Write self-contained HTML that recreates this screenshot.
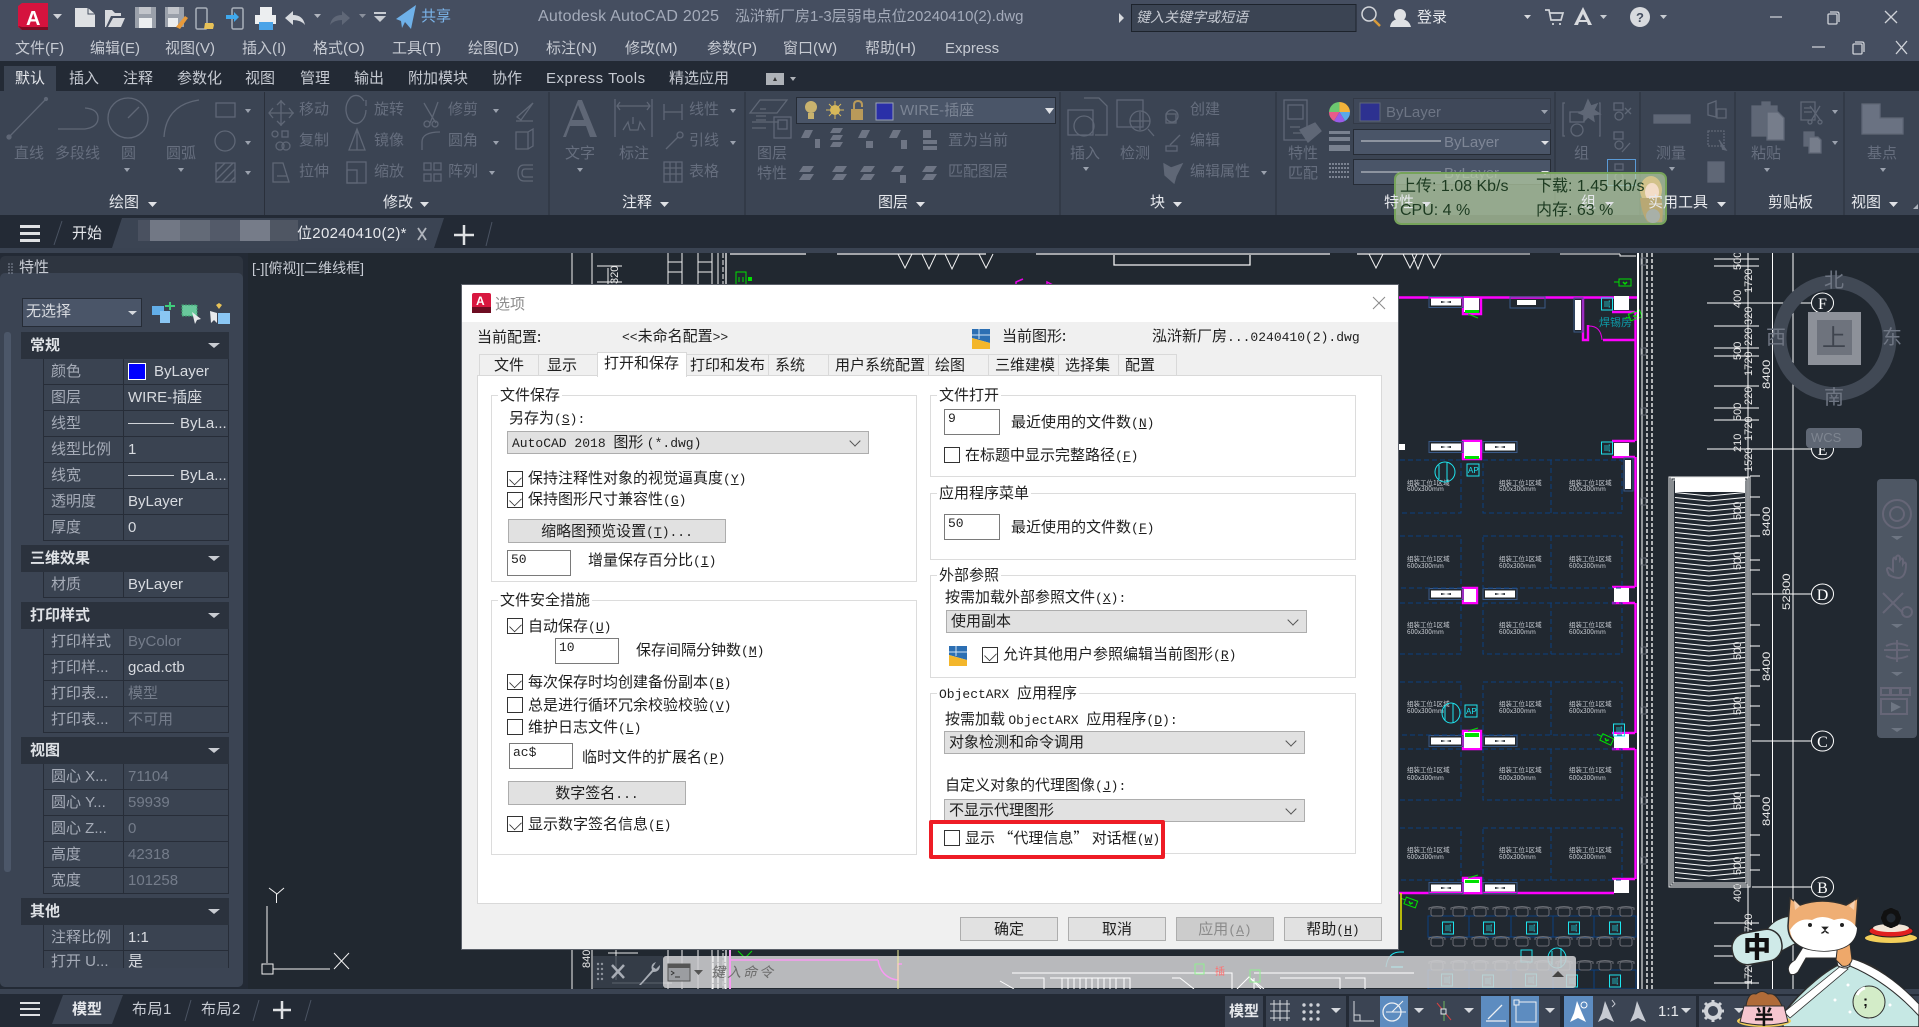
<!DOCTYPE html>
<html lang="zh-CN"><head><meta charset="utf-8"><title>AutoCAD 2025 选项</title>
<style>
*{box-sizing:border-box;margin:0;padding:0}
html,body{width:1919px;height:1027px;overflow:hidden;background:#212830}
body{position:relative;font-family:"Liberation Sans","Noto Sans CJK SC",sans-serif;font-size:15px}
svg{position:absolute;left:0;top:0;display:block}
.b{position:absolute}
.t{position:absolute;white-space:nowrap;line-height:20px;height:20px}
.m{color:#c6cad2}.g{color:#666e7e}.l{color:#e6e8ec}
.sec{position:absolute;left:21px;width:208px;height:27px;background:#2b323d;color:#dfe2e6;font-weight:700;line-height:27px;padding-left:9px}
.sec:after{content:"";position:absolute;left:187px;top:11px;border:5px solid transparent;border-top:5px solid #c9ccd2;border-left-width:6px;border-right-width:6px}
.r{position:absolute;left:43px;width:186px;height:26px;background:#3a4351;border:1px solid #272d38;border-top:0;color:#a5abb7;line-height:25px;white-space:nowrap}
.r span{position:absolute;left:7px;top:0}
.r em{position:absolute;left:79px;top:0;height:25px;width:106px;padding-left:4px;border-left:1px solid #272d38;font-style:normal;color:#d8dbe0;overflow:hidden}
.r em.d{color:#747c8a}
.r em i{display:inline-block;width:46px;height:1px;background:#d0d3d8;vertical-align:4px;margin-right:6px}
#dlg{position:absolute;left:461px;top:284px;width:938px;height:666px;background:#f0f0f0;border:1px solid #5a5f68;color:#1e1e1e;font-family:"Noto Sans CJK SC","Liberation Sans",sans-serif;overflow:hidden}
#dlg .x{position:absolute;white-space:nowrap;line-height:20px;height:20px}
#dlg s{text-decoration:none;font-family:"Liberation Mono",monospace;font-size:13px}
#dlg u{text-underline-offset:1px}
.tab{position:absolute;top:69px;height:22px;background:#f0f0f0;border:1px solid #d9d9d9;border-bottom:0;line-height:20px;white-space:nowrap;padding-left:6px}
.grp{position:absolute;border:1px solid #dcdcdc;background:#fff}
.lg{position:absolute;background:#fff;white-space:nowrap;line-height:18px;height:18px;padding:0 2px}
.sel{position:absolute;background:#e1e1e1;border:1px solid #adadad;height:23px;line-height:20px;padding-left:4px;white-space:nowrap}
.sel:after{content:"";position:absolute;right:9px;top:5px;width:7px;height:7px;border-right:1px solid #555;border-bottom:1px solid #555;transform:rotate(45deg)}
.btn{position:absolute;background:#e1e1e1;border:1px solid #adadad;height:24px;line-height:21px;text-align:center;white-space:nowrap}
.inp{position:absolute;background:#fff;border:1px solid #7a7a7a;height:26px;line-height:18px;padding-left:3px;font-family:"Liberation Mono",monospace;font-size:13px}
.cb{position:absolute;width:16px;height:16px;background:#fff;border:1px solid #333}
.cb.c:after{content:"";position:absolute;left:3px;top:1px;width:8px;height:11px;border-right:1.5px solid #333;border-bottom:1.5px solid #333;transform:rotate(45deg) scale(.85)}
</style></head><body>

<!-- ===== viewport drawing ===== -->
<svg width="1919" height="1027">
<defs>
<pattern id="zig" width="70" height="5" patternUnits="userSpaceOnUse" x="1675" y="492"><path d="M0 .5L34 4L70 .5" fill="none" stroke="#fff" stroke-width="1"/></pattern>
<g id="win"><rect x="-1" y="-5.500" width="34" height="11" fill="none" stroke="#3a5a88"/><path d="M1-3.500h30v7H1z" fill="#fff"/><path d="M11-1l5 1 5-1v2l-5-1-5 1z" fill="#212830"/></g>
<g id="chr" fill="none" stroke="#6a6d74"><rect x="-6" y="-4" width="12" height="8" rx="2"/><path d="M-8-2v-2q8-3 16 0v2"/></g>
<g id="ic"><rect x="-5.500" y="-6" width="11" height="12" fill="none" stroke="#1ee4ee"/><path d="M-2-3v6M0-3v6M3-3h-1v6h1" stroke="#1ee4ee" fill="none" stroke-width=".7"/></g>
<g id="grn" fill="none" stroke="#00e000"><path d="M-6-3h12v7H-6zM-6 0h-5"/><path d="M-2 0l2 2 2-2" stroke-width="1.500"/></g>
</defs>
<rect x="248" y="253" width="1671" height="736" fill="#212830"/>
<!-- left part -->
<g stroke="#f2f2f2" fill="none">
<path d="M572 253V989M592 253V989M608 268v20"/>
<path d="M597 282h25M597 266h25"/>
<path d="M668 253V989M682 253V989M698 253V989M712 253V989M718 253V989"/>
<path d="M668 262h14M668 272h14M698 262h14M698 272h14"/>
<path d="M723 253V989" stroke-dasharray="5 2"/>
<path d="M726 253V989" stroke-width="1.300"/>
<path d="M730 254h76M837 254h149M1036 254h294M1357 254h83M1114 255v10h136v-10" stroke-width="1.300"/>
<path d="M898 254l7 14 7-14M922 254l7 15 7-15M945 254l7 15 7-15M979 254l7 14 7-14M1369 254l7 14 7-14M1403 254l7 14 7-14M1427 254l7 14 7-14"/>
<path d="M1380 254h150M1560 254h60M1620 254v2h16M1412 254l6 15 6-15"/>
</g>
<g transform="translate(741 279)" fill="none" stroke="#00e000"><rect x="-5" y="-7" width="10" height="14"/><path d="M-2-2v5M2-2v5"/></g><rect x="748" y="277" width="4" height="4" fill="#00e000"/>
<path d="M1016 290v-8l7-3M1047 290v-8l6 3" stroke="#e800e8" fill="none" stroke-width="1.500"/>
<!-- magenta walls -->
<g stroke="#ff00ff" stroke-width="2.400" fill="none">
<path d="M1399 297.500H1638M1399 893H1614"/>
<path d="M1635.500 312V441M1635.500 457V587M1635.500 603V733M1635.500 749V879"/>
<path d="M1612 312h23M1612 441h23M1612 457h23M1612 587h23M1612 603h23M1612 733h23M1612 749h23M1612 879h23"/>
<path d="M1583 298v42h5v-15M1603 340h32"/>
<path d="M1463 441h18v18h-18zM1463 588h14v15h-14zM1463 731h18v18h-18zM1463 297v17h18v-17M1463 878h18v15h-18z"/>
</g>
<path d="M1589 326q12 0 13 14" stroke="#e800e8" fill="none"/>
<g fill="#fff">
<rect x="1464" y="298" width="15" height="14"/><rect x="1464" y="442" width="16" height="16"/><rect x="1464" y="589" width="12" height="13"/><rect x="1464" y="732" width="16" height="16"/><rect x="1464" y="879" width="16" height="13"/>
<rect x="1614" y="296" width="15" height="14"/><rect x="1614" y="443" width="15" height="13"/><rect x="1614" y="588" width="15" height="14"/><rect x="1614" y="734" width="15" height="14"/><rect x="1614" y="880" width="15" height="13"/>
<rect x="1399" y="444" width="6" height="6"/>
</g>
<g fill="#00e000"><rect x="1465" y="310" width="14" height="3"/><rect x="1465" y="456" width="14" height="3"/><rect x="1465" y="733" width="14" height="4"/><rect x="1465" y="880" width="14" height="3"/></g>
<path d="M1468 314l10 4M1468 731l10-3M1468 878l10-3" stroke="#00e000"/>
<use href="#win" x="1430" y="302"/><use href="#win" x="1430" y="447"/><use href="#win" x="1484" y="447"/><use href="#win" x="1430" y="594"/><use href="#win" x="1484" y="594"/><use href="#win" x="1430" y="741"/><use href="#win" x="1484" y="741"/><use href="#win" x="1430" y="888"/><use href="#win" x="1484" y="888"/>
<rect x="1510" y="297" width="35" height="11" fill="none" stroke="#3a5a88"/><rect x="1517" y="300" width="19" height="5" fill="#fff"/>
<rect x="1574" y="298" width="9" height="34" fill="none" stroke="#3a5a88"/><rect x="1575" y="300" width="6" height="30" fill="#fff"/>
<rect x="1624" y="458" width="9" height="33" fill="none" stroke="#3a5a88"/><rect x="1625" y="460" width="6" height="29" fill="#fff"/>
<!-- dashed cells -->
<g fill="none" stroke="#0c3f80" stroke-dasharray="5 3">
<path d="M1400 460h61v53h-61M1483 460h139v53h-139zM1551 460v53"/>
<path d="M1400 536h61v52h-61M1483 536h139v52h-139zM1551 536v52"/>
<path d="M1400 603h61v51h-61M1483 603h139v51h-139zM1551 603v51"/>
<path d="M1400 682h61v53h-61M1483 682h139v53h-139zM1551 682v53"/>
<path d="M1400 749h61v51h-61M1483 749h139v51h-139zM1551 749v51"/>
<path d="M1400 828h61v52h-61M1483 828h139v52h-139zM1551 828v52"/>
</g>
<g font-family="Noto Sans CJK SC,sans-serif" font-size="6.500" fill="#c8ccd2">
<text x="1407" y="485">组装工位1区域</text><text x="1407" y="491">600x300mm</text><text x="1499" y="485">组装工位1区域</text><text x="1499" y="491">600x300mm</text><text x="1569" y="485">组装工位1区域</text><text x="1569" y="491">600x300mm</text>
<text x="1407" y="561">组装工位1区域</text><text x="1407" y="568">600x300mm</text><text x="1499" y="561">组装工位1区域</text><text x="1499" y="568">600x300mm</text><text x="1569" y="561">组装工位1区域</text><text x="1569" y="568">600x300mm</text>
<text x="1407" y="627">组装工位1区域</text><text x="1407" y="634">600x300mm</text><text x="1499" y="627">组装工位1区域</text><text x="1499" y="634">600x300mm</text><text x="1569" y="627">组装工位1区域</text><text x="1569" y="634">600x300mm</text>
<text x="1407" y="706">组装工位1区域</text><text x="1407" y="713">600x300mm</text><text x="1499" y="706">组装工位1区域</text><text x="1499" y="713">600x300mm</text><text x="1569" y="706">组装工位1区域</text><text x="1569" y="713">600x300mm</text>
<text x="1407" y="772">组装工位1区域</text><text x="1407" y="780">600x300mm</text><text x="1499" y="772">组装工位1区域</text><text x="1499" y="780">600x300mm</text><text x="1569" y="772">组装工位1区域</text><text x="1569" y="780">600x300mm</text>
<text x="1407" y="852">组装工位1区域</text><text x="1407" y="859">600x300mm</text><text x="1499" y="852">组装工位1区域</text><text x="1499" y="859">600x300mm</text><text x="1569" y="852">组装工位1区域</text><text x="1569" y="859">600x300mm</text>
</g>
<text x="1599" y="326" font-family="Noto Sans CJK SC,sans-serif" font-size="11" fill="#0e9aa7">焊锡房</text>
<use href="#ic" x="1607" y="304"/><use href="#ic" x="1607" y="448"/><use href="#ic" x="1619" y="730"/>
<g fill="none" stroke="#1ee4ee"><rect x="1467" y="464" width="12" height="12"/><rect x="1465" y="705" width="12" height="12"/><ellipse cx="1445" cy="472" rx="10" ry="10"/><path d="M1439 465v14M1447 462v20"/><ellipse cx="1451" cy="713" rx="9" ry="10"/><path d="M1445 706v14M1453 703v20"/></g>
<g font-size="8" fill="#1ee4ee"><text x="1468" y="473">AP</text><text x="1466" y="714">AP</text></g>
<use href="#grn" transform="translate(1625 282)"/><use href="#grn" transform="translate(1635 315) rotate(-20)"/><use href="#grn" transform="translate(1607 739) rotate(25)"/><use href="#grn" transform="translate(1411 902) rotate(20)"/>
<!-- rails -->
<g stroke="#fff" fill="none"><path d="M1638 253V989" stroke-width="2"/><path d="M1642 253V989"/><path d="M1647 253V989M1652 253V989" stroke-dasharray="4 2" stroke-width="1.300"/></g>
<g fill="none" stroke="#666c76"><rect x="1641" y="258" width="5" height="7"/><rect x="1641" y="348" width="5" height="7"/><rect x="1641" y="408" width="5" height="7"/><rect x="1641" y="498" width="5" height="7"/><rect x="1641" y="558" width="5" height="7"/><rect x="1641" y="647" width="5" height="7"/><rect x="1641" y="707" width="5" height="7"/><rect x="1641" y="797" width="5" height="7"/><rect x="1641" y="857" width="5" height="7"/></g>
<!-- stair -->
<g fill="none" stroke="#f0f0f0"><rect x="1669" y="477" width="81" height="410"/><rect x="1671" y="478" width="77" height="407"/><rect x="1673" y="480" width="73" height="403"/></g>
<rect x="1675" y="478" width="70" height="14" fill="#fff"/>
<rect x="1675" y="492" width="70" height="388" fill="url(#zig)"/>
<!-- axis lines -->
<g stroke="#fff" fill="none">
<path d="M1772.500 253V989M1793 253V989M1748 253V989" />
<path d="M1752 303h59M1707 449h104M1752 594h59M1752 741h59M1752 887h59"/>
<path d="M1714 259h45M1714 266h45M1707 303h45M1714 326h45M1714 348h45M1714 356h45M1714 386h45M1714 408h45M1714 420h45"/>
<path d="M1750 476h10M1750 497h10M1750 515h10M1750 536h10M1750 560h10M1750 570h10M1750 625h10M1750 646h10M1750 670h10M1750 686h10M1750 706h10M1750 725h10M1750 775h10M1750 796h10M1750 835h10M1750 855h10M1750 870h10"/>
<path d="M1714 923h45M1714 946h45M1714 956h45M1714 983h45"/>
<ellipse cx="1822.500" cy="303" rx="11" ry="10" fill="#212830"/><ellipse cx="1822.500" cy="449" rx="11" ry="10" fill="#212830"/><ellipse cx="1822.500" cy="594" rx="11" ry="10" fill="#212830"/><ellipse cx="1822.500" cy="741" rx="11" ry="10" fill="#212830"/><ellipse cx="1822.500" cy="887" rx="11" ry="10" fill="#212830"/>
</g>
<g font-family="Liberation Serif,serif" font-size="16" fill="#fff" text-anchor="middle"><text x="1822.500" y="309">F</text><text x="1822.500" y="455">E</text><text x="1822.500" y="600">D</text><text x="1822.500" y="747">C</text><text x="1822.500" y="893">B</text></g>
<g font-family="Liberation Sans,sans-serif" font-size="11" fill="#e8e8e8">
<text transform="translate(1770 389) rotate(-90) scale(1.200 1)">8400</text><text transform="translate(1770 536) rotate(-90) scale(1.200 1)">8400</text><text transform="translate(1770 681) rotate(-90) scale(1.200 1)">8400</text><text transform="translate(1770 826) rotate(-90) scale(1.200 1)">8400</text><text transform="translate(1790 610) rotate(-90) scale(1.200 1)">52800</text>
<text transform="translate(1741 270) rotate(-90)">500</text><text transform="translate(1741 308) rotate(-90)">400</text><text transform="translate(1741 360) rotate(-90)">500</text><text transform="translate(1741 421) rotate(-90)">500</text><text transform="translate(1741 452) rotate(-90)">210</text>
<text transform="translate(1752 293) rotate(-90)">1720</text><text transform="translate(1752 325) rotate(-90)">320</text><text transform="translate(1752 346) rotate(-90)">220</text><text transform="translate(1752 376) rotate(-90)">1720</text><text transform="translate(1752 405) rotate(-90)">220</text><text transform="translate(1752 441) rotate(-90)">1720</text><text transform="translate(1752 472) rotate(-90)">1520</text>
<text transform="translate(1741 520) rotate(-90)">500</text><text transform="translate(1741 570) rotate(-90)">500</text><text transform="translate(1741 660) rotate(-90)">500</text><text transform="translate(1741 715) rotate(-90)">500</text><text transform="translate(1741 810) rotate(-90)">500</text><text transform="translate(1741 875) rotate(-90)">500</text>
<text transform="translate(1741 902) rotate(-90)">400</text><text transform="translate(1752 938) rotate(-90)">1720</text><text transform="translate(1752 985) rotate(-90)">1720</text>
<text transform="translate(590 968) rotate(-90)">8400</text>
<text transform="translate(618 284) rotate(-90)">320</text>
</g>
<!-- bottom room -->
<g fill="none" stroke="#0c3f80"><rect x="1428" y="916" width="208" height="21"/><path d="M1469 916v21M1511 916v21M1553 916v21M1594 916v21"/><rect x="1428" y="970" width="208" height="19"/><path d="M1469 970v19M1511 970v19M1553 970v19M1594 970v19"/></g>
<use href="#chr" x="1437" y="912"/><use href="#chr" x="1459" y="912"/><use href="#chr" x="1480" y="912"/><use href="#chr" x="1501" y="912"/><use href="#chr" x="1522" y="912"/><use href="#chr" x="1543" y="912"/><use href="#chr" x="1564" y="912"/><use href="#chr" x="1585" y="912"/><use href="#chr" x="1605" y="912"/><use href="#chr" x="1626" y="912"/>
<use href="#chr" x="1437" y="942"/><use href="#chr" x="1459" y="942"/><use href="#chr" x="1480" y="942"/><use href="#chr" x="1501" y="942"/><use href="#chr" x="1522" y="942"/><use href="#chr" x="1543" y="942"/><use href="#chr" x="1564" y="942"/><use href="#chr" x="1585" y="942"/><use href="#chr" x="1605" y="942"/><use href="#chr" x="1626" y="942"/>
<use href="#chr" x="1437" y="966"/><use href="#chr" x="1459" y="966"/><use href="#chr" x="1480" y="966"/><use href="#chr" x="1501" y="966"/><use href="#chr" x="1522" y="966"/><use href="#chr" x="1543" y="966"/><use href="#chr" x="1564" y="966"/><use href="#chr" x="1585" y="966"/><use href="#chr" x="1605" y="966"/><use href="#chr" x="1626" y="966"/>
<use href="#ic" x="1448" y="928"/><use href="#ic" x="1489" y="928"/><use href="#ic" x="1532" y="928"/><use href="#ic" x="1574" y="928"/><use href="#ic" x="1615" y="928"/>
<use href="#ic" x="1447" y="980"/><use href="#ic" x="1488" y="981"/><use href="#ic" x="1531" y="980"/><use href="#ic" x="1572" y="981"/><use href="#ic" x="1615" y="981"/>
<rect x="1521" y="950" width="11" height="12" fill="none" stroke="#1ee4ee"/><ellipse cx="1557" cy="958" rx="9" ry="10" fill="none" stroke="#1ee4ee"/><path d="M1552 951v14M1561 948v20" stroke="#1ee4ee" fill="none"/>
<path d="M1401 893v37" stroke="#e8e800" stroke-width="1.500"/>
<path d="M1386 967q2-15 14-15h4" fill="none" stroke="#1ee4ee"/>
<path d="M1391 967h12" stroke="#1ee4ee" stroke-width="2"/>
<path d="M738 951l7 7 7-7" stroke="#00e000" fill="none"/>
<path d="M616 950v30M608 953h30M612 983h60" stroke="#e8e8e8" fill="none"/>
<!-- UCS -->
<g stroke="#f2f2f2" fill="none"><path d="M267 906v57M273 969h57M334 953l15 16M349 953l-15 16M269 888l8 6 7-6M276.500 894v9"/><rect x="262" y="964" width="11" height="10"/></g>
<!-- view cube -->
<ellipse cx="1834.500" cy="338" rx="55" ry="56" fill="none" stroke="#414955" stroke-width="14"/>
<rect x="1808" y="312" width="53" height="53" fill="#8d9199"/><rect x="1817" y="320" width="35" height="35" fill="#6e737d"/>
<rect x="1806" y="428" width="56" height="20" rx="4" fill="#5f6774"/>
<!-- nav bar -->
<rect x="1877" y="479" width="40" height="259" rx="4" fill="#4e5764"/>
<g fill="none" stroke="#667" stroke-width="2"><ellipse cx="1897" cy="514" rx="14" ry="14"/><ellipse cx="1897" cy="514" rx="7" ry="7"/><path d="M1889 575q-4-8 0-7l4 3v-11q1-5 3 0v-3q2-3 4 0v3q2-3 3 0v4q2-3 3 0q0 13-7 14q-5 0-10-3zM1883 593l20 20M1903 593l-20 20"/><circle cx="1907" cy="612" r="5"/><path d="M1897 640v22M1884 650h26M1886 646q10-5 22 0M1886 656q10 5 22 0M1881 688h9v7h-9zM1891 688h9v7h-9zM1901 688h9v7h-9zM1881 699h26v15h-26z"/></g>
<path d="M1891 702l10 5-10 5z" fill="#6e7683"/>
<path d="M1891 536h12l-6 4zM1891 624h12l-6 4zM1891 672h12l-6 4zM1891 728h12l-6 4z" fill="#6e7683"/>
<!-- command bar -->
<rect x="593" y="956" width="70" height="32" fill="#3a414e" opacity=".8"/>
<rect x="663" y="956" width="913" height="32" rx="3" fill="#cfcfd1" opacity=".87"/>
<!-- lines showing brightly through the bar -->
<path d="M730 950V989" stroke="#f79af2" stroke-width="2"/><path d="M730 960h148M878 960q3 18 20 20v-16h4" stroke="#f79af2" fill="none" stroke-width="1.500"/><path d="M898 950V989" stroke="#f4f09a"/>
<path d="M713 956V989M718 956V989M725 956V989" stroke="#fff" stroke-dasharray="6 1"/>
<g stroke="#fff" fill="none"><path d="M1012 973h220v16M1020 978h24v11M1044 978v11M1050 978h80v11M1172 978h8l14 11M1232 978v11M1254 973h160M1254 978v11M1280 978h60v11M1345 978h20v11"/><path d="M1062 978v11M1068 978v11M1074 978v11M1080 978v11M1086 978v11M1092 978v11M1098 978v11M1104 978v11M1110 978v11M1116 978v11M1124 978v11"/><path d="M1237 989l12-12 12 12M1264 989l-15-12"/></g>
<path d="M1014 989l-14-8" stroke="#fff"/>
<rect x="1195" y="964" width="9" height="10" fill="none" stroke="#90ee90"/><text x="1215" y="975" font-size="10" fill="#ff7070">插</text>
<rect x="1250" y="970" width="10" height="12" fill="none" stroke="#90ee90"/>
<g fill="#8d939c"><circle cx="598" cy="964" r="1.200"/><circle cx="602" cy="964" r="1.200"/><circle cx="598" cy="969" r="1.200"/><circle cx="602" cy="969" r="1.200"/><circle cx="598" cy="974" r="1.200"/><circle cx="602" cy="974" r="1.200"/><circle cx="598" cy="979" r="1.200"/><circle cx="602" cy="979" r="1.200"/></g>
<path d="M612 965l12 13M624 965l-12 13" stroke="#a8adb5" stroke-width="2.500"/>
<path d="M639 985l13-15q-2-6 4-8l-3 5 3 2 4-4q0 7-7 7l-12 13z" fill="#a8adb5"/>
<rect x="668" y="964" width="22" height="17" fill="#9b9da1" stroke="#555"/><rect x="668" y="964" width="22" height="4" fill="#555"/><path d="M671 971l3 2-3 2M675 977h5" stroke="#333" fill="none"/><path d="M694 970h9l-4.500 5z" fill="#555"/>
<path d="M1552 977l6-6 6 6z" fill="#444"/>
</svg>

<!-- ===== chrome backgrounds ===== -->
<div class="b" style="left:0;top:0;width:1919px;height:61px;background:#454e60"></div>
<div class="b" style="left:0;top:61px;width:1919px;height:30px;background:#232a35"></div>
<div class="b" style="left:4px;top:66px;width:52px;height:25px;background:#3b4453"></div>
<div class="b" style="left:0;top:91px;width:1919px;height:124px;background:#3b4453"></div>
<div class="b" style="left:0;top:215px;width:1919px;height:33px;background:#232a35"></div>
<div class="b" style="left:0;top:248px;width:1919px;height:5px;background:#3a4352"></div>
<div class="b" style="left:0;top:253px;width:248px;height:736px;background:#232a35"></div>
<div class="b" style="left:0;top:256px;width:243px;height:731px;background:#2e3540;border-radius:5px"></div>
<div class="b" style="left:0;top:273px;width:243px;height:714px;background:#3b4453;border-radius:5px"></div>
<div class="b" style="left:4px;top:332px;width:7px;height:540px;background:#4c5769;border-radius:3px"></div>
<div class="b" style="left:0;top:989px;width:1919px;height:5px;background:#3a4352"></div>
<div class="b" style="left:0;top:994px;width:1919px;height:33px;background:#232a35"></div>
<div class="b" style="left:1225px;top:996px;width:38px;height:31px;background:#3b4453"></div>
<div class="b" style="left:1266px;top:996px;width:80px;height:31px;background:#3b4453"></div>
<div class="b" style="left:1349px;top:996px;width:211px;height:31px;background:#3b4453"></div>
<div class="b" style="left:1380px;top:996px;width:28px;height:31px;background:#5d8cc0"></div>
<div class="b" style="left:1481px;top:996px;width:28px;height:31px;background:#5d8cc0"></div>
<div class="b" style="left:1511px;top:996px;width:28px;height:31px;background:#5d8cc0"></div>
<div class="b" style="left:1564px;top:996px;width:132px;height:31px;background:#3b4453"></div>
<div class="b" style="left:1564px;top:996px;width:29px;height:31px;background:#5d8cc0"></div>
<div class="b" style="left:1699px;top:996px;width:220px;height:31px;background:#3b4453"></div>

<!-- dropdowns on ribbon -->
<div class="b" style="left:796px;top:97px;width:260px;height:27px;background:#4a5568;border:1px solid #262c36"></div>
<div class="b" style="left:1353px;top:98px;width:198px;height:26px;background:#3f4859;border:1px solid #333a47"></div>
<div class="b" style="left:1353px;top:129px;width:198px;height:26px;background:#4a5568;border:1px solid #262c36"></div>
<div class="b" style="left:1353px;top:159px;width:198px;height:26px;background:#4a5568;border:1px solid #262c36"></div>
<div class="b" style="left:22px;top:298px;width:120px;height:29px;background:#4a5568;border:1px solid #262c36"></div>

<!-- 泓 partial, under the mosaic -->
<div class="t l" style="left:133px;top:224px">泓</div>

<!-- ===== icons ===== -->
<svg width="1919" height="1027">
<!-- logo -->
<path d="M18 6l4-3h26v27H22l-4-3z" fill="#d5133e"/><path d="M18 26l4 4h26v-3H22z" fill="#7c0c24"/>
<text x="26" y="25" font-family="Liberation Sans" font-weight="700" font-size="20" fill="#fff">A</text>
<path d="M53 14h9l-4.500 5z" fill="#cfd2d8"/>
<!-- QAT -->
<path d="M75 8h13l7 6v13H75z" fill="#dfe1e4"/><path d="M88 8v6h7" fill="none" stroke="#454e60"/>
<path d="M105 27V10h7l3 3h6v3h-10l-5 11zm3 0l5-9h12l-4 9z" fill="#d8dade"/>
<path d="M135 7h21v21h-21z" fill="#9aa0aa"/><rect x="139" y="7" width="12" height="7" fill="#c2c5cb"/><rect x="139" y="18" width="13" height="10" fill="#eceef0"/>
<path d="M165 7h19v20h-19z" fill="#9aa0aa"/><rect x="168" y="7" width="11" height="7" fill="#c2c5cb"/><rect x="168" y="18" width="10" height="9" fill="#eceef0"/><path d="M176 27l9-11 3 2-8 11z" fill="#e89a3a"/>
<rect x="196" y="8" width="11" height="21" rx="1.500" fill="none" stroke="#aab0ba" stroke-width="1.500"/><path d="M205 23h8l1 2-1 4h-9z" fill="#e8c258"/>
<rect x="232" y="8" width="11" height="21" rx="1.500" fill="none" stroke="#aab0ba" stroke-width="1.500"/><path d="M226 15h8v-3l5 5-5 5v-3h-8z" fill="#3fa9ee"/>
<path d="M260 7h12v8h4v9h-21v-9h5z" fill="#eceef0"/><rect x="259" y="22" width="14" height="8" fill="#4aa3e8"/>
<path d="M285 18l8-7v4q10 0 12 10q-4-5-12-5v5z" fill="#d7dadf"/><path d="M314 14h7l-3.500 4z" fill="#b0b5be"/>
<path d="M350 18l-8-7v4q-10 0-12 10q4-5 12-5v5z" fill="#5f6777"/><path d="M359 14h7l-3.500 4z" fill="#8a909c"/>
<path d="M374 12h12v2h-12zM374 16h12l-6 6z" fill="#c8ccd2"/>
<path d="M396 19l20-14-5 24-6-7-3 6-1-7z" fill="#6fb1e9"/>
<!-- title right -->
<path d="M1119 13l5 5-5 5z" fill="#d8dade"/>
<rect x="1131.500" y="4.500" width="224.500" height="27" fill="#3b4453" stroke="#1d232c"/>
<circle cx="1369" cy="14" r="7" fill="none" stroke="#d2d5da" stroke-width="1.500"/><path d="M1374 20l6 6" stroke="#d89a3a" stroke-width="2.500"/>
<circle cx="1400" cy="15" r="6" fill="#dfe1e4"/><path d="M1390 27q1-8 10-8t11 8z" fill="#dfe1e4"/>
<path d="M1524 15h7l-3.500 4z" fill="#d8dade"/>
<path d="M1545 10h4l2 10h10l2-7h-13M1552 24h2M1559 24h2" fill="none" stroke="#d0d3d8" stroke-width="1.700"/>
<path d="M1583 7l9 18h-4l-1-3h-8l-1 3h-4zM1583 14l-3 6h6z" fill="#d8dade"/><path d="M1600 15h7l-3.500 4z" fill="#c8ccd2"/>
<circle cx="1640" cy="17" r="10" fill="#d8dade"/><text x="1636" y="22" font-size="13" font-weight="700" fill="#454e60">?</text><path d="M1660 15h7l-3.500 4z" fill="#c8ccd2"/>
<g fill="none" stroke="#cfd2d8" stroke-width="1.300"><path d="M1770 17h12M1885 11l12 12M1897 11l-12 12"/><rect x="1828" y="14" width="9" height="10" rx="1"/><path d="M1830 12h7q2 0 2 2v8"/>
<path d="M1812 47h13M1896 41l11 13M1907 41l-11 13"/><rect x="1853" y="44" width="9" height="10" rx="1"/><path d="M1855 42h7q2 0 2 2v8"/></g>
<!-- ribbon separators -->
<path d="M264.500 92v123M549 92v123M745 92v123M1060 92v123M1276 92v123M1555 92v123M1640 92v123M1735 92v123M1844 92v123" stroke="#2a303b"/>
<g fill="none" stroke="#5f6776" stroke-width="1.300">
<path d="M46 99L9 137"/><circle cx="46" cy="99" r="1.500" fill="#5f6776"/><circle cx="9" cy="137" r="2" fill="#5f6776"/>
<path d="M58 129h27q13-2 13-11t-13-10"/><circle cx="128" cy="118" r="20"/><path d="M128 118l11-11"/><path d="M164 137q2-32 35-37"/>
<rect x="216" y="103" width="19" height="14"/><circle cx="225" cy="141" r="10"/><rect x="216" y="163" width="19" height="19"/><path d="M216 172l9-9M216 180l17-17M222 182l13-13M230 182l5-5"/>
<path d="M281 100v26M269 113h25"/><path d="M277 105l4-4 4 4M277 121l4 4 4-4M273 108l-4 5 4 5M289 108l4 5-4 5"/>
<circle cx="275" cy="134" r="3"/><rect x="282" y="131" width="6" height="6"/><circle cx="280" cy="146" r="4"/><circle cx="286" cy="146" r="4"/>
<path d="M273 163h10l6 19h-16zM277 176h10"/>
<path d="M364 101a10 14 0 1 0 2 9M366 100v6"/><path d="M349 150l8-21 8 21zM357 129v21"/><rect x="347" y="162" width="19" height="21"/><rect x="347" y="170" width="10" height="13"/>
<path d="M424 103q8 14 12 20M438 102q-5 14-8 21"/><circle cx="427" cy="124" r="3"/><circle cx="435" cy="124" r="3"/>
<path d="M422 150v-8q0-10 18-10"/><rect x="424" y="163" width="7" height="7"/><rect x="434" y="163" width="7" height="7"/><rect x="424" y="174" width="7" height="7"/><rect x="434" y="174" width="7" height="7"/>
<path d="M516 121h17M533 103l-12 17-4-3zM516 149h12v-17h-12zM528 132l5-3v17l-5 3"/><path d="M533 165h-9q-6 0-6 8t6 8h9M533 169h-8q-3 0-3 4t3 4h8"/>
<!-- annotation -->
<path d="M615 99v38M652 99v38M617 106h33M620 102l-3 4 3 4M647 102l3 4-3 4M623 130l5-8 2 8h8l2-8 5 8M633 117v7"/>
<path d="M664 104v16M682 104v16M664 112h18"/><path d="M666 149l12-12"/><circle cx="680" cy="135" r="3"/><rect x="664" y="162" width="18" height="20"/><path d="M664 168h18M664 174h18M670 162v20M676 162v20"/>
<!-- layer -->
<path d="M760 100h27l-10 13h-27zM760 109h6M756 116h10M756 120h10"/><path d="M752 122h27M752 128h14"/>
<rect x="774" y="117" width="17" height="21"/><rect x="778" y="120" width="9" height="9"/>
<!-- block -->
<rect x="1068" y="110" width="25" height="25"/><circle cx="1084" cy="126" r="10"/><path d="M1084 98h15l8 8v29h-12"/>
<rect x="1117" y="100" width="26" height="27"/><circle cx="1140" cy="121" r="10"/><path d="M1148 129l6 7M1130 121h20M1140 112v18"/>
<circle cx="1172" cy="116" r="6"/><path d="M1166 114h10v9h-10z"/><rect x="1166" y="146" width="11" height="5"/><path d="M1170 145l10-10"/>
<path d="M1164 164l7 4 11-4-6 12-2 7-9-8z" fill="#5f6776"/>
<!-- props -->
<rect x="1284" y="100" width="23" height="40"/><rect x="1288" y="105" width="15" height="14"/><path d="M1290 127h10M1293 133h10"/><path d="M1300 130l15-7 6 8-13 11z" fill="#5f6776"/>
<!-- group -->
<path d="M1565 103h-2v33h2M1599 103h1v33h-1"/><rect x="1570" y="112" width="14" height="10"/><circle cx="1577" cy="130" r="6"/><path d="M1588 100l3 6 6-2-3 6 6 4-7 1 1 6-6-4-4 4v-6l-5-2 5-3z" fill="#5f6776"/>
<rect x="1614" y="103" width="9" height="7"/><circle cx="1619" cy="116" r="4"/><rect x="1614" y="132" width="9" height="7"/><circle cx="1619" cy="145" r="4"/><path d="M1622 152l8-9"/><path d="M1625 108l6 6M1631 108l-6 6"/>
<rect x="1615" y="164" width="8" height="6"/><circle cx="1619" cy="177" r="4"/>
<!-- util -->
<rect x="1654" y="115" width="36" height="8" fill="#5f6776"/><path d="M1708 104l8-3v16l-8-2zM1717 109h9v9h-9z"/><rect x="1708" y="131" width="16" height="15" stroke-dasharray="2 1"/><path d="M1719 140l7 10-4-1" fill="#5f6776"/><rect x="1708" y="162" width="16" height="20" fill="#5f6776"/>
<!-- clipboard -->
<path d="M1752 106h10v-4h8v4h7v30h-25z" fill="#5f6776"/><path d="M1767 112h11l6 6v22h-17z" fill="#767d8b"/>
<path d="M1801 102h14v18h-14zM1804 108h8M1804 112h8"/><path d="M1810 106l11 15M1820 106l-9 15"/><circle cx="1810" cy="122" r="2"/><circle cx="1820" cy="122" r="2"/>
<path d="M1804 132h10v14h-10z" fill="#5f6776"/><path d="M1809 137h9l3 3v13h-12z" fill="#767d8b"/>
<path d="M1862 104h18v14h23v16h-41z" fill="#6a7282"/>
</g>
<g fill="#5f6776"><path d="M563 137l15-37h4l15 37h-7l-4-11h-16l-4 11zM572 120h12l-6-15z"/></g>
<!-- small row icons layers -->
<g fill="#6e7584"><path d="M805 130l8 0-4 8-8 0zM815 139h5v9h-5zM833 128h10l-3 5h-10zM833 135h10l-3 5h-10zM833 142h10l-3 5h-10zM862 130h8l-4 8h-8zM866 141h7v7h-7zM893 130h8l-4 8h-8zM901 140h6v9h-6zM923 130h8v8h-8zM923 140h14v4h-14zM923 146h14v4h-14z"/>
<path d="M803 166h11l-4 6h-11zM803 174h11l-4 6h-11zM836 166h11l-4 6h-11zM836 174h11l-4 6h-11zM864 166h11l-4 6h-11zM864 174h11l-4 6h-11zM895 166h9l-4 6h-9zM900 175h6v8h-6zM926 166h11l-4 6h-11zM926 174h11l-4 6h-11z"/></g>
<g fill="#c8b26e"><circle cx="811" cy="107" r="6"/></g><rect x="808" y="113" width="6" height="6" fill="#c8b26e"/>
<circle cx="835" cy="110" r="5" fill="#d6b85a"/><path d="M835 101v18M826 110h18M829 104l12 12M841 104l-12 12" stroke="#d6b85a"/>
<rect x="851" y="109" width="12" height="11" fill="#b99a5a"/><path d="M854 109v-4q0-4 4-4t4 4v2" fill="none" stroke="#b99a5a" stroke-width="2"/>
<rect x="876" y="103" width="17" height="17" fill="#2a2fa8" stroke="#9aa2b2"/>
<rect x="1360" y="103" width="20" height="18" fill="#2d3190" stroke="#5f6776"/>
<!-- wheel -->
<path d="M1339.500 102A10.500 10.500 0 0 1 1350 112h-10.500z" fill="#f3b23a"/><path d="M1350 112a10.500 10.500 0 0 1-5 9l-5.500-9z" fill="#5aa9e8"/><path d="M1345 121a10.500 10.500 0 0 1-11 0l5.500-9z" fill="#9a5ce8"/><path d="M1334 121a10.500 10.500 0 0 1-5-9h10.500z" fill="#e85c8a"/><path d="M1329 112a10.500 10.500 0 0 1 10.500-10V112z" fill="#6cc870"/>
<path d="M1329 131h21v3h-21zM1329 137h21v4h-21zM1329 145h21v6h-21z" fill="#7a8290"/>
<path d="M1329 164h21M1329 168h21M1329 172h21M1329 177h21" stroke="#7a8290" stroke-dasharray="2 1" stroke-width="2"/>
<path d="M1361 141h80M1361 172h80" stroke="#d0d3d8"/>
<rect x="1607.500" y="159.500" width="28" height="26" fill="none" stroke="#5a9ad6"/>
<!-- arrows -->
<g fill="#9ba2ae"><path d="M245 109h6l-3 4zM245 141h6l-3 4zM245 171h6l-3 4zM124 168h6l-3 4zM178 168h6l-3 4zM493 109h6l-3 4zM493 141h6l-3 4zM489 171h6l-3 4zM577 168h6l-3 4zM730 109h6l-3 4zM730 141h6l-3 4zM1083 167h6l-3 4zM1261 171h6l-3 4zM1669 167h6l-3 4zM1764 168h6l-3 4zM1880 168h6l-3 4zM1832 110h6l-3 4zM1832 141h6l-3 4zM1541 110h7l-3.500 4z"/></g>
<g fill="#e0e2e6"><path d="M148 202h9l-4.500 5zM420 202h9l-4.500 5zM660 202h9l-4.500 5zM916 202h9l-4.500 5zM1173 202h9l-4.500 5zM1889 202h9l-4.500 5zM1541 141h8l-4 4zM1045 108h9l-4.500 6zM1541 171h8l-4 4z"/></g>
<rect x="766" y="73" width="18" height="12" fill="#aeb2b8"/><path d="M775 77l-2 4h4z" fill="#333"/><path d="M790 77h6l-3 4z" fill="#aeb2b8"/>
<path d="M1913 209l5-5v5z" fill="#aab0ba"/>
<!-- tabs row -->
<path d="M112 248l10-30h322l-10 30z" fill="#3b4453"/>
<path d="M20 225h20v3h-20zM20 232h20v3h-20zM20 239h20v3h-20z" fill="#dfe1e4"/>
<path d="M62 221l-8 24M492 222l-6 24" stroke="#4a5362"/>
<path d="M418 228l8 12M426 228l-8 12" stroke="#b0b4bc" stroke-width="1.800"/>
<path d="M464 225v20M454 235h20" stroke="#dfe1e4" stroke-width="2.500"/>
<!-- prop panel -->
<g fill="#8f97a5"><circle cx="9" cy="264" r=".8"/><circle cx="12" cy="264" r=".8"/><circle cx="9" cy="267" r=".8"/><circle cx="12" cy="267" r=".8"/><circle cx="9" cy="270" r=".8"/><circle cx="12" cy="270" r=".8"/><circle cx="9" cy="273" r=".8"/><circle cx="12" cy="273" r=".8"/></g>
<path d="M128 311h9l-4.500 4z" fill="#d6d9de"/>
<rect x="152" y="306" width="12" height="9" fill="#62aee8"/><rect x="160" y="311" width="10" height="12" fill="#8ac6f3"/><path d="M168 305h4v-3h2v3h4v2h-4v3h-2v-3h-4z" transform="translate(-3 0)" fill="#3fce7c"/>
<rect x="182" y="305" width="15" height="11" fill="#69c89c" stroke="#3fa070" stroke-dasharray="2 1"/><path d="M192 312l9 7-4 1-2 4z" fill="#e8eaec"/>
<path d="M210 311l7 2v10l-3-3-3 3z" fill="#e8eaec"/><rect x="218" y="313" width="12" height="11" fill="#8ac6f3"/><path d="M216 305l3 4 3-4-3-2z" fill="#e8c258"/>
<!-- status bar -->
<path d="M52 1024l11-29h60l-11 29z" fill="#3b4453"/>
<path d="M20 1002h20v2h-20zM20 1008h20v2h-20zM20 1014h20v2h-20z" fill="#dfe1e4"/>
<path d="M191 1000l-6 21M259 1000l-6 21M311 1000l-6 21" stroke="#4a5362"/>
<path d="M282 1001v18M273 1010h18" stroke="#dfe1e4" stroke-width="2.500"/>
<path d="M1270 1004h20M1270 1011h20M1270 1018h20M1274 1000v21M1280 1000v21M1287 1000v21" stroke="#d6d9de"/>
<g fill="#cfd2d8"><circle cx="1304" cy="1005" r="1.700"/><circle cx="1311" cy="1005" r="1.700"/><circle cx="1318" cy="1005" r="1.700"/><circle cx="1304" cy="1012" r="1.700"/><circle cx="1311" cy="1012" r="1.700"/><circle cx="1318" cy="1012" r="1.700"/><circle cx="1304" cy="1019" r="1.700"/><circle cx="1311" cy="1019" r="1.700"/><circle cx="1318" cy="1019" r="1.700"/></g>
<path d="M1331 1008h10l-5 5zM1414 1008h10l-5 5zM1464 1008h10l-5 5zM1545 1008h10l-5 5zM1681 1008h10l-5 5zM1734 1008h10l-5 5z" fill="#d6d9de"/>
<path d="M1354 1001v20h20M1354 1015h6v6" stroke="#d6d9de" fill="none"/>
<circle cx="1392" cy="1012" r="9" fill="none" stroke="#eef0f3" stroke-width="1.300"/><path d="M1386 1012h20M1392 1012l11-11" stroke="#eef0f3" fill="none"/>
<path d="M1437 1003l14 17" stroke="#d94040"/><path d="M1444 1001v20" stroke="#6cb45c"/><rect x="1441" y="1009" width="5" height="5" fill="#3b4453" stroke="#e6e8ec"/>
<path d="M1486 1021h20M1488 1019l14-14" stroke="#eef0f3" stroke-width="1.300" fill="none"/>
<rect x="1516" y="1002" width="20" height="20" fill="none" stroke="#eef0f3"/><rect x="1514" y="1000" width="5" height="5" fill="#5d8cc0" stroke="#eef0f3"/>
<path d="M1577 1001l5 12 4 9-8-4-8 4 4-9z" fill="#fff"/><circle cx="1584" cy="1005" r="3" fill="none" stroke="#fff"/>
<path d="M1605 1001l5 12 4 9-8-4-8 4 4-9z" fill="#c6cad2"/><path d="M1612 1000l3 4-3 3" stroke="#c6cad2" fill="none"/>
<path d="M1637 1001l5 12 4 9-8-4-8 4 4-9z" fill="#c6cad2"/>
<circle cx="1713" cy="1011" r="7" fill="none" stroke="#d0d3d8" stroke-width="4"/><path d="M1713 1000v3M1713 1019v3M1702 1011h3M1721 1011h3M1705 1003l2 2M1719 1017l2 2M1721 1003l-2 2M1707 1017l-2 2" stroke="#d0d3d8" stroke-width="3"/>
<path d="M1905 1016h14" stroke="#d6d9de" stroke-width="2"/>
<path d="M1824 1021h14l-7-11z" fill="#e8b23a"/>
<!-- mosaic over file name -->
<rect x="138" y="220" width="160" height="21" fill="#535a69"/><rect x="150" y="220" width="30" height="21" fill="#727885"/><rect x="180" y="220" width="30" height="21" fill="#636a77"/><rect x="240" y="220" width="30" height="21" fill="#767c89"/><rect x="270" y="220" width="28" height="21" fill="#4f5663"/><rect x="138" y="220" width="12" height="21" fill="#4a5160"/>
</svg>

<!-- ===== text ===== -->
<div class="t" style="left:538px;top:7px;color:#a4abba;font-size:16px;letter-spacing:.2px">Autodesk AutoCAD 2025</div>
<div class="t" style="left:735px;top:7px;color:#a4abba;font-size:15px">泓浒新厂房1-3层弱电点位20240410(2).dwg</div>
<div class="t" style="left:421px;top:7px;color:#7ab3e8;font-size:15px">共享</div>
<div class="t" style="left:1136px;top:7px;color:#c6cad2;font-size:14px;font-style:italic">键入关键字或短语</div>
<div class="t" style="left:1417px;top:8px;color:#e6e8ec;font-size:15px">登录</div>

<div class="t m" style="left:15px;top:39px">文件(F)</div><div class="t m" style="left:90px;top:39px">编辑(E)</div><div class="t m" style="left:165px;top:39px">视图(V)</div><div class="t m" style="left:242px;top:39px">插入(I)</div><div class="t m" style="left:313px;top:39px">格式(O)</div><div class="t m" style="left:392px;top:39px">工具(T)</div><div class="t m" style="left:468px;top:39px">绘图(D)</div><div class="t m" style="left:546px;top:39px">标注(N)</div><div class="t m" style="left:625px;top:39px">修改(M)</div><div class="t m" style="left:707px;top:39px">参数(P)</div><div class="t m" style="left:783px;top:39px">窗口(W)</div><div class="t m" style="left:865px;top:39px">帮助(H)</div><div class="t m" style="left:945px;top:39px">Express</div>

<div class="t l" style="left:15px;top:69px">默认</div><div class="t m" style="left:69px;top:69px">插入</div><div class="t m" style="left:123px;top:69px">注释</div><div class="t m" style="left:177px;top:69px">参数化</div><div class="t m" style="left:245px;top:69px">视图</div><div class="t m" style="left:300px;top:69px">管理</div><div class="t m" style="left:354px;top:69px">输出</div><div class="t m" style="left:408px;top:69px">附加模块</div><div class="t m" style="left:492px;top:69px">协作</div><div class="t m" style="left:546px;top:69px;letter-spacing:.5px">Express Tools</div><div class="t m" style="left:669px;top:69px">精选应用</div>

<!-- ribbon labels -->
<div class="t g" style="left:14px;top:144px">直线</div><div class="t g" style="left:55px;top:144px">多段线</div><div class="t g" style="left:121px;top:144px">圆</div><div class="t g" style="left:166px;top:144px">圆弧</div>
<div class="t g" style="left:299px;top:100px">移动</div><div class="t g" style="left:374px;top:100px">旋转</div><div class="t g" style="left:448px;top:100px">修剪</div>
<div class="t g" style="left:299px;top:131px">复制</div><div class="t g" style="left:374px;top:131px">镜像</div><div class="t g" style="left:448px;top:131px">圆角</div>
<div class="t g" style="left:299px;top:162px">拉伸</div><div class="t g" style="left:374px;top:162px">缩放</div><div class="t g" style="left:448px;top:162px">阵列</div>
<div class="t g" style="left:565px;top:144px">文字</div><div class="t g" style="left:619px;top:144px">标注</div><div class="t g" style="left:689px;top:100px">线性</div><div class="t g" style="left:689px;top:131px">引线</div><div class="t g" style="left:689px;top:162px">表格</div>
<div class="t g" style="left:757px;top:144px">图层</div><div class="t g" style="left:757px;top:164px">特性</div>
<div class="t" style="left:900px;top:101px;color:#7b8494;font-size:15px">WIRE-插座</div>
<div class="t g" style="left:948px;top:131px">置为当前</div><div class="t g" style="left:948px;top:162px">匹配图层</div>
<div class="t g" style="left:1070px;top:144px">插入</div><div class="t g" style="left:1120px;top:144px">检测</div><div class="t g" style="left:1190px;top:100px">创建</div><div class="t g" style="left:1190px;top:131px">编辑</div><div class="t g" style="left:1190px;top:162px">编辑属性</div>
<div class="t g" style="left:1288px;top:144px">特性</div><div class="t g" style="left:1288px;top:164px">匹配</div>
<div class="t" style="left:1386px;top:103px;color:#6d7585">ByLayer</div><div class="t" style="left:1444px;top:133px;color:#7e8696">ByLayer</div><div class="t" style="left:1444px;top:164px;color:#7e8696">ByLayer</div>
<div class="t g" style="left:1574px;top:144px">组</div><div class="t g" style="left:1656px;top:144px">测量</div><div class="t g" style="left:1751px;top:144px">粘贴</div><div class="t g" style="left:1867px;top:144px">基点</div>
<div class="t l" style="left:109px;top:193px">绘图</div><div class="t l" style="left:383px;top:193px">修改</div><div class="t l" style="left:622px;top:193px">注释</div><div class="t l" style="left:878px;top:193px">图层</div><div class="t l" style="left:1150px;top:193px">块</div><div class="t l" style="left:1768px;top:193px">剪贴板</div><div class="t l" style="left:1851px;top:193px">视图</div>
<div class="t l" style="left:72px;top:224px">开始</div>
<div class="t l" style="left:297px;top:224px;font-size:15px;letter-spacing:.3px">位20240410(2)*</div>

<!-- properties panel -->
<div class="t" style="left:19px;top:258px;color:#c8ccd4">特性</div>
<div class="t" style="left:26px;top:302px;color:#d8dbe0">无选择</div>
<div class="sec" style="top:332px">常规</div>
<div class="r" style="top:359px"><span>颜色</span><em><b style="display:inline-block;width:18px;height:17px;background:#00f;border:1px solid #fff;vertical-align:-4px;margin-right:8px"></b>ByLayer</em></div>
<div class="r" style="top:385px"><span>图层</span><em>WIRE-插座</em></div>
<div class="r" style="top:411px"><span>线型</span><em><i></i>ByLa...</em></div>
<div class="r" style="top:437px"><span>线型比例</span><em>1</em></div>
<div class="r" style="top:463px"><span>线宽</span><em><i></i>ByLa...</em></div>
<div class="r" style="top:489px"><span>透明度</span><em>ByLayer</em></div>
<div class="r" style="top:515px"><span>厚度</span><em>0</em></div>
<div class="sec" style="top:545px">三维效果</div>
<div class="r" style="top:572px"><span>材质</span><em>ByLayer</em></div>
<div class="sec" style="top:602px">打印样式</div>
<div class="r" style="top:629px"><span>打印样式</span><em class="d">ByColor</em></div>
<div class="r" style="top:655px"><span>打印样...</span><em>gcad.ctb</em></div>
<div class="r" style="top:681px"><span>打印表...</span><em class="d">模型</em></div>
<div class="r" style="top:707px"><span>打印表...</span><em class="d">不可用</em></div>
<div class="sec" style="top:737px">视图</div>
<div class="r" style="top:764px"><span>圆心 X...</span><em class="d">71104</em></div>
<div class="r" style="top:790px"><span>圆心 Y...</span><em class="d">59939</em></div>
<div class="r" style="top:816px"><span>圆心 Z...</span><em class="d">0</em></div>
<div class="r" style="top:842px"><span>高度</span><em class="d">42318</em></div>
<div class="r" style="top:868px"><span>宽度</span><em class="d">101258</em></div>
<div class="sec" style="top:898px">其他</div>
<div class="r" style="top:925px"><span>注释比例</span><em>1:1</em></div>
<div class="r" style="top:951px;height:17px;line-height:21px;border-bottom:0;overflow:hidden"><span>打开 U...</span><em>是</em></div>

<div class="t" style="left:252px;top:258px;color:#c8ccd4;font-size:14px">[-][俯视][二维线框]</div>
<div class="t" style="left:711px;top:962px;color:#6d6d6d;font-size:14px;font-style:italic;letter-spacing:2px">键入命令</div>

<!-- status text -->
<div class="t l" style="left:72px;top:1000px;font-weight:700">模型</div>
<div class="t m" style="left:132px;top:1000px;letter-spacing:.5px">布局1</div><div class="t m" style="left:201px;top:1000px;letter-spacing:.5px">布局2</div>
<div class="t l" style="left:1229px;top:1002px;font-weight:700">模型</div>
<div class="t l" style="left:1658px;top:1002px">1:1</div>

<!-- viewcube labels -->
<div class="t" style="left:1824px;top:271px;color:#6f7683;font-size:20px">北</div>
<div class="t" style="left:1824px;top:388px;color:#6f7683;font-size:20px">南</div>
<div class="t" style="left:1766px;top:328px;color:#6f7683;font-size:20px">西</div>
<div class="t" style="left:1882px;top:328px;color:#6f7683;font-size:20px">东</div>
<div class="t" style="left:1822px;top:327px;color:#3f444e;font-size:24px;line-height:24px;height:24px">上</div>
<div class="t" style="left:1811px;top:428px;color:#7e8590;font-size:13px">WCS</div>

<!-- net meter -->
<div class="b" style="left:1394px;top:172px;width:273px;height:53px;background:rgba(184,208,165,.72);border:2px solid #76a35a;border-radius:7px"></div>
<svg width="1919" height="1027" style="pointer-events:none"><ellipse cx="1651" cy="190" rx="11" ry="14" fill="#d8c48a" opacity=".9"/><ellipse cx="1652" cy="192" rx="7" ry="9" fill="#f3ddc8"/><path d="M1640 198q2 18 8 24h14q2-14-1-24z" fill="#b8a874"/><circle cx="1653" cy="216" r="7" fill="#a8b0a8"/>
<path d="M1422 202h9l-4.500 5zM1605 202h9l-4.500 5zM1717 202h9l-4.500 5z" fill="#e0e2e6"/></svg>
<div class="t" style="left:1384px;top:193px;color:#e6e8ec">特性</div><div class="t" style="left:1581px;top:193px;color:#e6e8ec">组</div><div class="t" style="left:1648px;top:193px;color:#e6e8ec">实用工具</div>
<div class="t" style="left:1400px;top:177px;color:#1c3a20;font-size:16px">上传: 1.08 Kb/s</div>
<div class="t" style="left:1536px;top:177px;color:#1c3a20;font-size:16px">下载: 1.45 Kb/s</div>
<div class="t" style="left:1400px;top:201px;color:#1c3a20;font-size:16px">CPU: 4 %</div>
<div class="t" style="left:1536px;top:201px;color:#1c3a20;font-size:16px">内存: 63 %</div>

<!-- ===== dialog ===== -->
<div id="dlg">
<div class="b" style="left:0;top:0;width:936px;height:37px;background:#fff"></div>
<svg width="30" height="30" style="left:9px;top:7px"><path d="M1 3q0-2 2-2h15q2 0 2 2v16q0 2-2 2H3q-2 0-2-2z" fill="#d8173f"/><rect x="1" y="15" width="19" height="6" fill="#6e0d22"/><text x="5" y="13" font-family="Liberation Sans" font-weight="700" font-size="12" fill="#fff">A</text></svg>
<div class="x" style="left:33px;top:9px;color:#8c8c8c">选项</div>
<svg width="20" height="20" style="left:907px;top:9px"><path d="M4 3l12 12M16 3L4 15" stroke="#8a8a8a"/></svg>

<div class="x" style="left:15px;top:42px">当前配置:</div><div class="x" style="left:160px;top:41px"><s>&lt;&lt;</s>未命名配置<s>&gt;&gt;</s></div>
<svg width="20" height="22" style="left:510px;top:43px"><path d="M0 1h18v14l-18-5z" fill="#2c6fb3"/><path d="M0 10l18 5v6H0z" fill="#f3b62b"/><path d="M7 1v10M0 7h18" stroke="#cfe3f5"/></svg>
<div class="x" style="left:540px;top:41px">当前图形:</div>
<div class="x" style="left:690px;top:41px">泓浒新厂房<s>...0240410(2).dwg</s></div>

<div class="tab" style="left:17px;width:60px;padding-left:14px">文件</div>
<div class="tab" style="left:76px;width:60px;padding-left:8px">显示</div>
<div class="tab" style="left:224px;width:83px;padding-left:3px">打印和发布</div>
<div class="tab" style="left:306px;width:61px">系统</div>
<div class="tab" style="left:366px;width:101px">用户系统配置</div>
<div class="tab" style="left:466px;width:61px">绘图</div>
<div class="tab" style="left:526px;width:71px">三维建模</div>
<div class="tab" style="left:596px;width:61px">选择集</div>
<div class="tab" style="left:656px;width:59px">配置</div>
<div class="b" style="left:15px;top:90px;width:905px;height:529px;background:#fff;border:1px solid #d9d9d9"></div>
<div class="tab" style="left:135px;top:67px;width:90px;height:25px;background:#fff;z-index:2">打开和保存</div>

<!-- 文件保存 -->
<div class="grp" style="left:29px;top:110px;width:426px;height:187px"></div>
<div class="lg" style="left:36px;top:101px">文件保存</div>
<div class="x" style="left:47px;top:123px">另存为<s>(<u>S</u>):</s></div>
<div class="sel" style="left:45px;top:146px;width:362px"><s>AutoCAD 2018 </s>图形 <s>(*.dwg)</s></div>
<div class="cb c" style="left:45px;top:186px"></div><div class="x" style="left:66px;top:183px">保持注释性对象的视觉逼真度<s>(<u>Y</u>)</s></div>
<div class="cb c" style="left:45px;top:207px"></div><div class="x" style="left:66px;top:204px">保持图形尺寸兼容性<s>(<u>G</u>)</s></div>
<div class="btn" style="left:46px;top:234px;width:218px">缩略图预览设置<s>(<u>T</u>)...</s></div>
<div class="inp" style="left:45px;top:265px;width:64px">50</div>
<div class="x" style="left:126px;top:265px">增量保存百分比<s>(<u>I</u>)</s></div>

<!-- 文件安全措施 -->
<div class="grp" style="left:29px;top:315px;width:426px;height:255px"></div>
<div class="lg" style="left:36px;top:306px">文件安全措施</div>
<div class="cb c" style="left:45px;top:333px"></div><div class="x" style="left:66px;top:331px">自动保存<s>(<u>U</u>)</s></div>
<div class="inp" style="left:93px;top:353px;width:64px">10</div>
<div class="x" style="left:174px;top:355px">保存间隔分钟数<s>(<u>M</u>)</s></div>
<div class="cb c" style="left:45px;top:389px"></div><div class="x" style="left:66px;top:387px">每次保存时均创建备份副本<s>(<u>B</u>)</s></div>
<div class="cb" style="left:45px;top:412px"></div><div class="x" style="left:66px;top:410px">总是进行循环冗余校验校验<s>(<u>V</u>)</s></div>
<div class="cb" style="left:45px;top:434px"></div><div class="x" style="left:66px;top:432px">维护日志文件<s>(<u>L</u>)</s></div>
<div class="inp" style="left:47px;top:458px;width:64px">ac$</div>
<div class="x" style="left:120px;top:462px">临时文件的扩展名<s>(<u>P</u>)</s></div>
<div class="btn" style="left:46px;top:496px;width:178px">数字签名<s>...</s></div>
<div class="cb c" style="left:45px;top:531px"></div><div class="x" style="left:66px;top:529px">显示数字签名信息<s>(<u>E</u>)</s></div>

<!-- 文件打开 -->
<div class="grp" style="left:468px;top:110px;width:426px;height:82px"></div>
<div class="lg" style="left:475px;top:101px">文件打开</div>
<div class="inp" style="left:482px;top:124px;width:56px">9</div>
<div class="x" style="left:549px;top:127px">最近使用的文件数<s>(<u>N</u>)</s></div>
<div class="cb" style="left:482px;top:162px"></div><div class="x" style="left:503px;top:160px">在标题中显示完整路径<s>(<u>F</u>)</s></div>

<!-- 应用程序菜单 -->
<div class="grp" style="left:468px;top:208px;width:426px;height:67px"></div>
<div class="lg" style="left:475px;top:199px">应用程序菜单</div>
<div class="inp" style="left:482px;top:229px;width:56px">50</div>
<div class="x" style="left:549px;top:232px">最近使用的文件数<s>(<u>F</u>)</s></div>

<!-- 外部参照 -->
<div class="grp" style="left:468px;top:290px;width:426px;height:103px"></div>
<div class="lg" style="left:475px;top:281px">外部参照</div>
<div class="x" style="left:483px;top:302px">按需加载外部参照文件<s>(<u>X</u>):</s></div>
<div class="sel" style="left:484px;top:325px;width:361px">使用副本</div>
<svg width="20" height="22" style="left:487px;top:360px"><path d="M0 1h18v14l-18-5z" fill="#2c6fb3"/><path d="M0 10l18 5v6H0z" fill="#f3b62b"/><path d="M7 1v10M0 7h18" stroke="#cfe3f5"/></svg>
<div class="cb c" style="left:520px;top:362px"></div><div class="x" style="left:541px;top:359px">允许其他用户参照编辑当前图形<s>(<u>R</u>)</s></div>

<!-- ObjectARX -->
<div class="grp" style="left:468px;top:408px;width:426px;height:161px"></div>
<div class="lg" style="left:475px;top:399px"><s>ObjectARX </s>应用程序</div>
<div class="x" style="left:483px;top:424px">按需加载 <s>ObjectARX </s>应用程序<s>(<u>D</u>):</s></div>
<div class="sel" style="left:482px;top:446px;width:361px">对象检测和命令调用</div>
<div class="x" style="left:483px;top:490px">自定义对象的代理图像<s>(<u>J</u>):</s></div>
<div class="sel" style="left:482px;top:514px;width:361px">不显示代理图形</div>
<div class="b" style="left:467px;top:535px;width:236px;height:39px;background:#fff;border:4px solid #ee1c25;border-radius:2px"></div>
<div class="cb" style="left:482px;top:545px"></div><div class="x" style="left:503px;top:543px">显示 “代理信息” 对话框<s>(<u>W</u>)</s></div>

<div class="btn" style="left:498px;top:632px;width:98px">确定</div>
<div class="btn" style="left:606px;top:632px;width:98px">取消</div>
<div class="btn" style="left:714px;top:632px;width:98px;background:#ccc;color:#8a8a8a">应用<s>(<u>A</u>)</s></div>
<div class="btn" style="left:822px;top:632px;width:98px">帮助<s>(<u>H</u>)</s></div>
</div>

<!-- ===== mascot ===== -->
<svg width="1919" height="1027">
<!-- gear ornament -->
<ellipse cx="1891" cy="938" rx="26" ry="5" fill="#f3cf5a"/><ellipse cx="1891" cy="931" rx="22" ry="6" fill="#e02020" stroke="#222"/><ellipse cx="1891" cy="928" rx="18" ry="4" fill="#f2e6d8"/>
<circle cx="1891" cy="918" r="7" fill="none" stroke="#111" stroke-width="5"/><path d="M1891 908v3M1891 925v3M1881 918h3M1898 918h3M1884 911l2 2M1896 923l2 2M1898 911l-2 2M1886 923l-2 2" stroke="#111" stroke-width="3"/>
<!-- dome -->
<path d="M1783 1014C1800 992 1830 964 1852 960C1880 962 1905 992 1919 1014V1027H1783Z" fill="#c6e8e4" stroke="#2e2e2e" stroke-width="1.500"/>
<path d="M1784 1012L1842 965L1848 969L1790 1018Z" fill="#fff" stroke="#2e2e2e" stroke-width=".8"/>
<path d="M1850 958Q1885 968 1919 1004V1016Q1888 982 1850 966Z" fill="#fff" stroke="#2e2e2e"/>
<g fill="#fff"><circle cx="1848" cy="985" r="1.500"/><circle cx="1865" cy="990" r="1.500"/><circle cx="1835" cy="1000" r="1.500"/><circle cx="1890" cy="1005" r="1.500"/><circle cx="1850" cy="1012" r="1.500"/><circle cx="1870" cy="1018" r="1.500"/></g>
<!-- sleeve + capsule -->
<path d="M1768 928q10-12 26-12l8 24-30 16z" fill="#cfeae8" stroke="#2e2e2e"/>
<rect x="1732" y="931" width="50" height="32" rx="15" transform="rotate(-10 1757 947)" fill="#cfeae8" stroke="#2e2e2e" stroke-width="1.500"/>
<text x="1743" y="957" font-family="Noto Sans CJK SC,sans-serif" font-weight="900" font-size="28" fill="#111">中</text>
<!-- body -->
<path d="M1790 974q-5-8 5-14l10-16 40 0 5 22q-4 4-12 0l-2-8-30 0-8 14q-4 4-8 2z" fill="#fff" stroke="#2e2e2e"/>
<path d="M1838 942l12 2 2 16q-3 8-10 6l-6-6z" fill="#eea86a" stroke="#2e2e2e"/>
<!-- head -->
<path d="M1790 898L1800 905Q1822 897 1846 905L1858 898L1856 926Q1858 950 1824 951Q1788 950 1788 926Z" fill="#efae74" stroke="#2e2e2e" stroke-width="1.500"/>
<path d="M1790 930Q1798 917 1812 920Q1822 914 1834 920Q1848 915 1857 928Q1856 950 1824 951Q1792 950 1790 930Z" fill="#fff"/>
<path d="M1794 900l6 6-5 4zM1855 900l-6 6 5 4z" fill="#f6d0b0"/>
<circle cx="1810" cy="925" r="2" fill="#222"/><circle cx="1842" cy="925" r="2" fill="#222"/><path d="M1822 927h6l-3 3zM1825 930q-1 4-4 3M1825 930q1 4 4 3" fill="#222" stroke="#222" stroke-width=".7"/>
<!-- ball -->
<circle cx="1869" cy="1002" r="16" fill="#d3ecc8" stroke="#2e2e2e"/><path d="M1857 995q3-6 8-7" stroke="#fff" stroke-width="3" fill="none"/>
<text x="1863" y="1006" font-family="Liberation Sans" font-weight="700" font-size="15" fill="#111">;</text>
<!-- bowl -->
<ellipse cx="1764" cy="1021" rx="27" ry="6" fill="#f3cf5a"/>
<path d="M1744 1006h40l4 16q-24 6-48 0z" fill="#f6c6cf" stroke="#2e2e2e"/>
<path d="M1746 1006q2-14 10-12 6-5 12 0 8-2 14 12z" fill="#b06b38" stroke="#2e2e2e"/>
<text x="1754" y="1024" font-family="Noto Sans CJK SC,sans-serif" font-weight="700" font-size="20" fill="#111">半</text>
</svg>
</body></html>
